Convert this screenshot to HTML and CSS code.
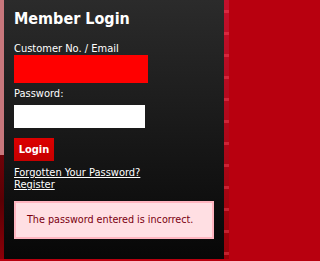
FILE: index.html
```html
<!DOCTYPE html>
<html>
<head>
<meta charset="utf-8">
<link rel="stylesheet" href="styles.css">
</head>
<body>
<div class="page">
  <div class="strip-left"></div>
  <div class="panel">
    <h2 class="title">Member Login</h2>
    <label class="label">Customer No. / Email</label>
    <div class="input input-error"></div>
    <label class="label label-pw">Password:</label>
    <div class="input input-pw"></div>
    <button class="btn">Login</button>
    <div class="links">
      <a class="link" href="#">Forgotten Your Password?</a>
      <a class="link" href="#">Register</a>
    </div>
    <div class="error">The password entered is incorrect.</div>
  </div>
  <div class="strip-right"></div>
</div>
</body>
</html>
```
FILE: styles.css
```css
html, body {
  margin: 0;
  padding: 0;
}
body {
  width: 229px;
  height: 261px;
  overflow: hidden;
  background: #b8000f;
  font-family: "DejaVu Sans Condensed", "DejaVu Sans", sans-serif;
}
.page {
  display: flex;
  height: 259px;
}
.strip-left {
  width: 4px;
  flex: none;
  background: linear-gradient(#c8777c 0, #c8777c 155px, #6e0208 155px, #5a0004 200px, #8a0008 259px);
}
.strip-right {
  flex: 1;
  background:
    repeating-linear-gradient(180deg, transparent 0 10px, rgba(255,80,100,0.4) 10px 13px, transparent 13px 22px),
    linear-gradient(#c4102c, #9a0008);
}
.panel {
  width: 220px;
  flex: none;
  box-sizing: border-box;
  padding: 9px 10px 0 10px;
  background: linear-gradient(#2b2b2b, #070707);
  display: flex;
  flex-direction: column;
  align-items: flex-start;
}
.title {
  margin: 0;
  font-size: 16px;
  line-height: 20px;
  font-weight: bold;
  color: #fff;
}
.label {
  display: block;
  margin-top: 13px;
  font-size: 11px;
  line-height: 13px;
  color: #fff;
}
.label-pw {
  margin-top: 4px;
}
.input {
  background: #fff;
}
.input-error {
  width: 134px;
  height: 28px;
  background: #ff0000;
}
.input-pw {
  margin-top: 5px;
  width: 131px;
  height: 23px;
}
.btn {
  margin-top: 10px;
  width: 40px;
  height: 23px;
  padding: 0;
  border: none;
  background: linear-gradient(#dc0000, #c60000);
  color: #fff;
  font-family: "DejaVu Sans Condensed", "DejaVu Sans", sans-serif;
  font-weight: bold;
  font-size: 11px;
}
.links {
  margin-top: 6px;
  display: flex;
  flex-direction: column;
  align-items: flex-start;
}
.link {
  color: #fff;
  font-size: 11px;
  line-height: 12px;
  text-decoration: underline;
}
.error {
  margin-top: 10px;
  box-sizing: border-box;
  width: 200px;
  height: 38px;
  border: 2px solid #ffb5c0;
  background: #ffdfe3;
  color: #7a0010;
  font-size: 10.7px;
  line-height: 13px;
  padding: 10px 0 0 11px;
}
```
